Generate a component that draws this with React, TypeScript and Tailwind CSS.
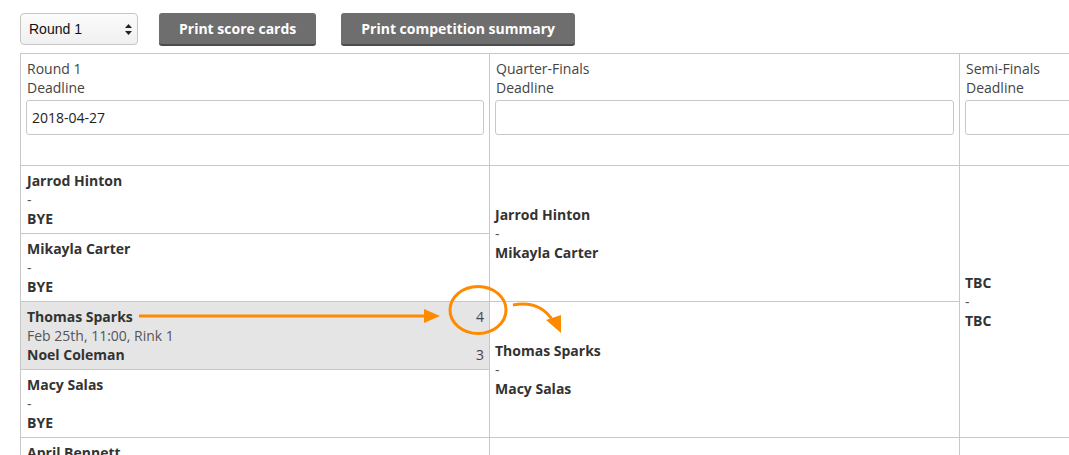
const font = { fontFamily: '"Open Sans", "Noto Sans", sans-serif' };

type Match = {
  home: string;
  away: string;
  info?: string;
  scores?: [number, number];
};

const round1: Match[] = [
  { home: "Jarrod Hinton", away: "BYE" },
  { home: "Mikayla Carter", away: "BYE" },
  { home: "Thomas Sparks", away: "Noel Coleman", info: "Feb 25th, 11:00, Rink 1", scores: [4, 3] },
  { home: "Macy Salas", away: "BYE" },
  { home: "April Bennett", away: "BYE" },
  { home: "Owen Hughes", away: "BYE" },
];

const quarters: Match[] = [
  { home: "Jarrod Hinton", away: "Mikayla Carter" },
  { home: "Thomas Sparks", away: "Macy Salas" },
  { home: "April Bennett", away: "Owen Hughes" },
];

function Pair({ m }: { m: Match }) {
  return (
    <div className="leading-[19px] text-[14px] text-[#333]">
      <div className="flex justify-between">
        <span className="font-bold">{m.home}</span>
        {m.scores && <span className="text-[#444]">{m.scores[0]}</span>}
      </div>
      <div className="text-[#555]">{m.info ?? "-"}</div>
      <div className="flex justify-between">
        <span className="font-bold">{m.away}</span>
        {m.scores && <span className="text-[#444]">{m.scores[1]}</span>}
      </div>
    </div>
  );
}

function HeaderCell({ title, value }: { title: string; value?: string }) {
  return (
    <th className="border border-[#c8c8c8] align-top text-left font-normal px-[5px] pt-[5px] h-[112px]">
      <div className="pl-[1px] text-[14px] leading-[19px] text-[#444]">{title}</div>
      <div className="pl-[1px] text-[14px] leading-[19px] text-[#444]">Deadline</div>
      <div className="mt-[3px] h-[35px] rounded-[3px] border border-[#c8c8c8] bg-white px-[5px] flex items-center text-[14px] text-[#222]">
        {value}
      </div>
    </th>
  );
}

export default function App() {
  return (
    <div className="relative w-[1069px] h-[455px] overflow-hidden bg-white" style={font}>
      <div className="flex items-start gap-[21px] pl-[20px] pt-[13px] h-[53px]">
        <div
          className="w-[118px] h-[32px] rounded-[4px] border border-[#c6c6c6] bg-gradient-to-b from-[#fbfbfb] to-[#f0f0f0] flex items-center justify-between pl-[8px] pr-[5px] text-[14px] text-[#111]"
          style={{ fontFamily: '"Liberation Sans", Arial, sans-serif' }}
        >
          <span>Round 1</span>
          <svg width="7" height="11" viewBox="0 0 7 11">
            <path d="M3.5 0 L7 4 H0 Z" fill="#222" />
            <path d="M3.5 11 L7 7 H0 Z" fill="#222" />
          </svg>
        </div>
        <button className="h-[33px] px-[20px] rounded-[3px] bg-[#6e6e6e] border-b-[2px] border-[#4c4c4c] text-white text-[14px] font-bold">
          Print score cards
        </button>
        <button className="ml-[4px] h-[33px] px-[20px] rounded-[3px] bg-[#6e6e6e] border-b-[2px] border-[#4c4c4c] text-white text-[14px] font-bold">
          Print competition summary
        </button>
      </div>

      <table className="ml-[20px] border-collapse table-fixed w-[1250px]">
        <colgroup>
          <col className="w-[469px]" />
          <col className="w-[470px]" />
          <col className="w-[311px]" />
        </colgroup>
        <thead>
          <tr>
            <HeaderCell title="Round 1" value="2018-04-27" />
            <HeaderCell title="Quarter-Finals" />
            <HeaderCell title="Semi-Finals" />
          </tr>
        </thead>
        <tbody>
          {round1.map((m, i) => (
            <tr key={m.home} className="h-[68px]">
              <td
                className={
                  "border border-[#c8c8c8] align-top px-[6px] py-[5px] pr-[5px] " +
                  (m.scores ? "bg-[#e5e5e5]" : "bg-white")
                }
              >
                <Pair m={m} />
              </td>
              {i % 2 === 0 && (
                <td rowSpan={2} className="border border-[#c8c8c8] align-middle px-[5px]">
                  <Pair m={quarters[i / 2]} />
                </td>
              )}
              {i % 4 === 0 && (
                <td rowSpan={4} className="border border-[#c8c8c8] align-middle px-[5px]">
                  <Pair m={{ home: "TBC", away: "TBC" }} />
                </td>
              )}
            </tr>
          ))}
        </tbody>
      </table>

      <svg className="absolute left-0 top-0 pointer-events-none" width="1069" height="455">
        <line x1="139" y1="316" x2="426" y2="316" stroke="#ff8a00" strokeWidth="3" />
        <path d="M424 309 L440 316 L424 323 Z" fill="#ff8a00" />
        <ellipse cx="478" cy="310" rx="28" ry="23.5" fill="none" stroke="#ff8a00" strokeWidth="3" />
        <path d="M513 305 Q540 300 553 321" fill="none" stroke="#ff8a00" strokeWidth="3" />
        <path d="M546 320 L561 333 L561 315 Z" fill="#ff8a00" />
      </svg>
    </div>
  );
}
